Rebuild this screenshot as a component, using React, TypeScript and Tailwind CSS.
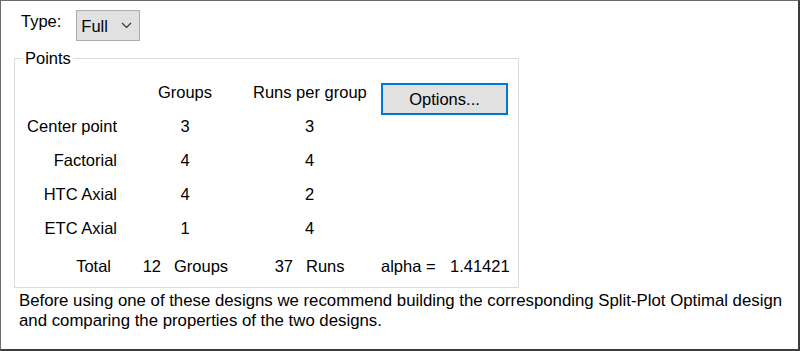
const rows = [
  { label: "Center point", groups: "3", runs: "3" },
  { label: "Factorial", groups: "4", runs: "4" },
  { label: "HTC Axial", groups: "4", runs: "2" },
  { label: "ETC Axial", groups: "1", runs: "4" },
];

function Chevron() {
  return (
    <svg width="11" height="7" viewBox="0 0 11 7" className="shrink-0">
      <path d="M1 1l4.5 4.5L10 1" fill="none" stroke="#333" strokeWidth="1.2" />
    </svg>
  );
}

export default function App() {
  return (
    <div
      className="w-[800px] h-[351px] bg-white text-black border-t border-l border-t-[#6b6b6b] border-l-[#6b6b6b] border-r-2 border-b-2 border-r-[#3c3c3c] border-b-[#3c3c3c] overflow-hidden"
      style={{ fontFamily: '"Liberation Sans", Arial, sans-serif' }}
    >
      <div className="text-[16.5px] leading-[20px] whitespace-nowrap">
        {/* Type selector */}
        <div className="flex items-start pt-[9px] pl-[20px]">
          <span className="mt-[1px]">Type:</span>
          <div className="ml-[15px] w-[64px] h-[31px] bg-[#e1e1e1] border border-[#adadad] flex items-center pl-[4px] pr-[7px] justify-between">
            <span>Full</span>
            <Chevron />
          </div>
        </div>

        {/* Points group */}
        <fieldset className="ml-[13px] mt-[8px] w-[505px] h-[239px] border border-[#dcdcdc]">
          <legend className="ml-[8px] px-[2px] leading-[18px]">Points</legend>
          <div className="mt-[8px] flex h-[34px] items-center">
            <div className="w-[102px]" />
            <div className="w-[136px] text-center">Groups</div>
            <div className="w-[113px] text-center">Runs per group</div>
            <button className="self-start mt-[8px] ml-[15px] w-[127px] h-[32px] shrink-0 bg-[#e1e1e1] border-2 border-[#0078d7] text-center">
              Options...
            </button>
          </div>
          {rows.map((r) => (
            <div key={r.label} className="flex h-[34px] items-center">
              <div className="w-[102px] text-right">{r.label}</div>
              <div className="w-[136px] text-center">{r.groups}</div>
              <div className="w-[113px] text-center">{r.runs}</div>
            </div>
          ))}
          <div className="mt-[4px] flex h-[34px] items-center">
            <div className="w-[96px] text-right">Total</div>
            <div className="w-[50px] text-right">12</div>
            <div className="ml-[13px] w-[88px]">Groups</div>
            <div className="w-[31px] text-right">37</div>
            <div className="ml-[13px] w-[75px]">Runs</div>
            <div className="w-[69px]">alpha =</div>
            <div>1.41421</div>
          </div>
        </fieldset>

        <p className="pl-[18px] mt-[3px] text-[16.8px] leading-[20px]">
          Before using one of these designs we recommend building the corresponding Split-Plot Optimal design
          <br />
          and comparing the properties of the two designs.
        </p>
      </div>
    </div>
  );
}
